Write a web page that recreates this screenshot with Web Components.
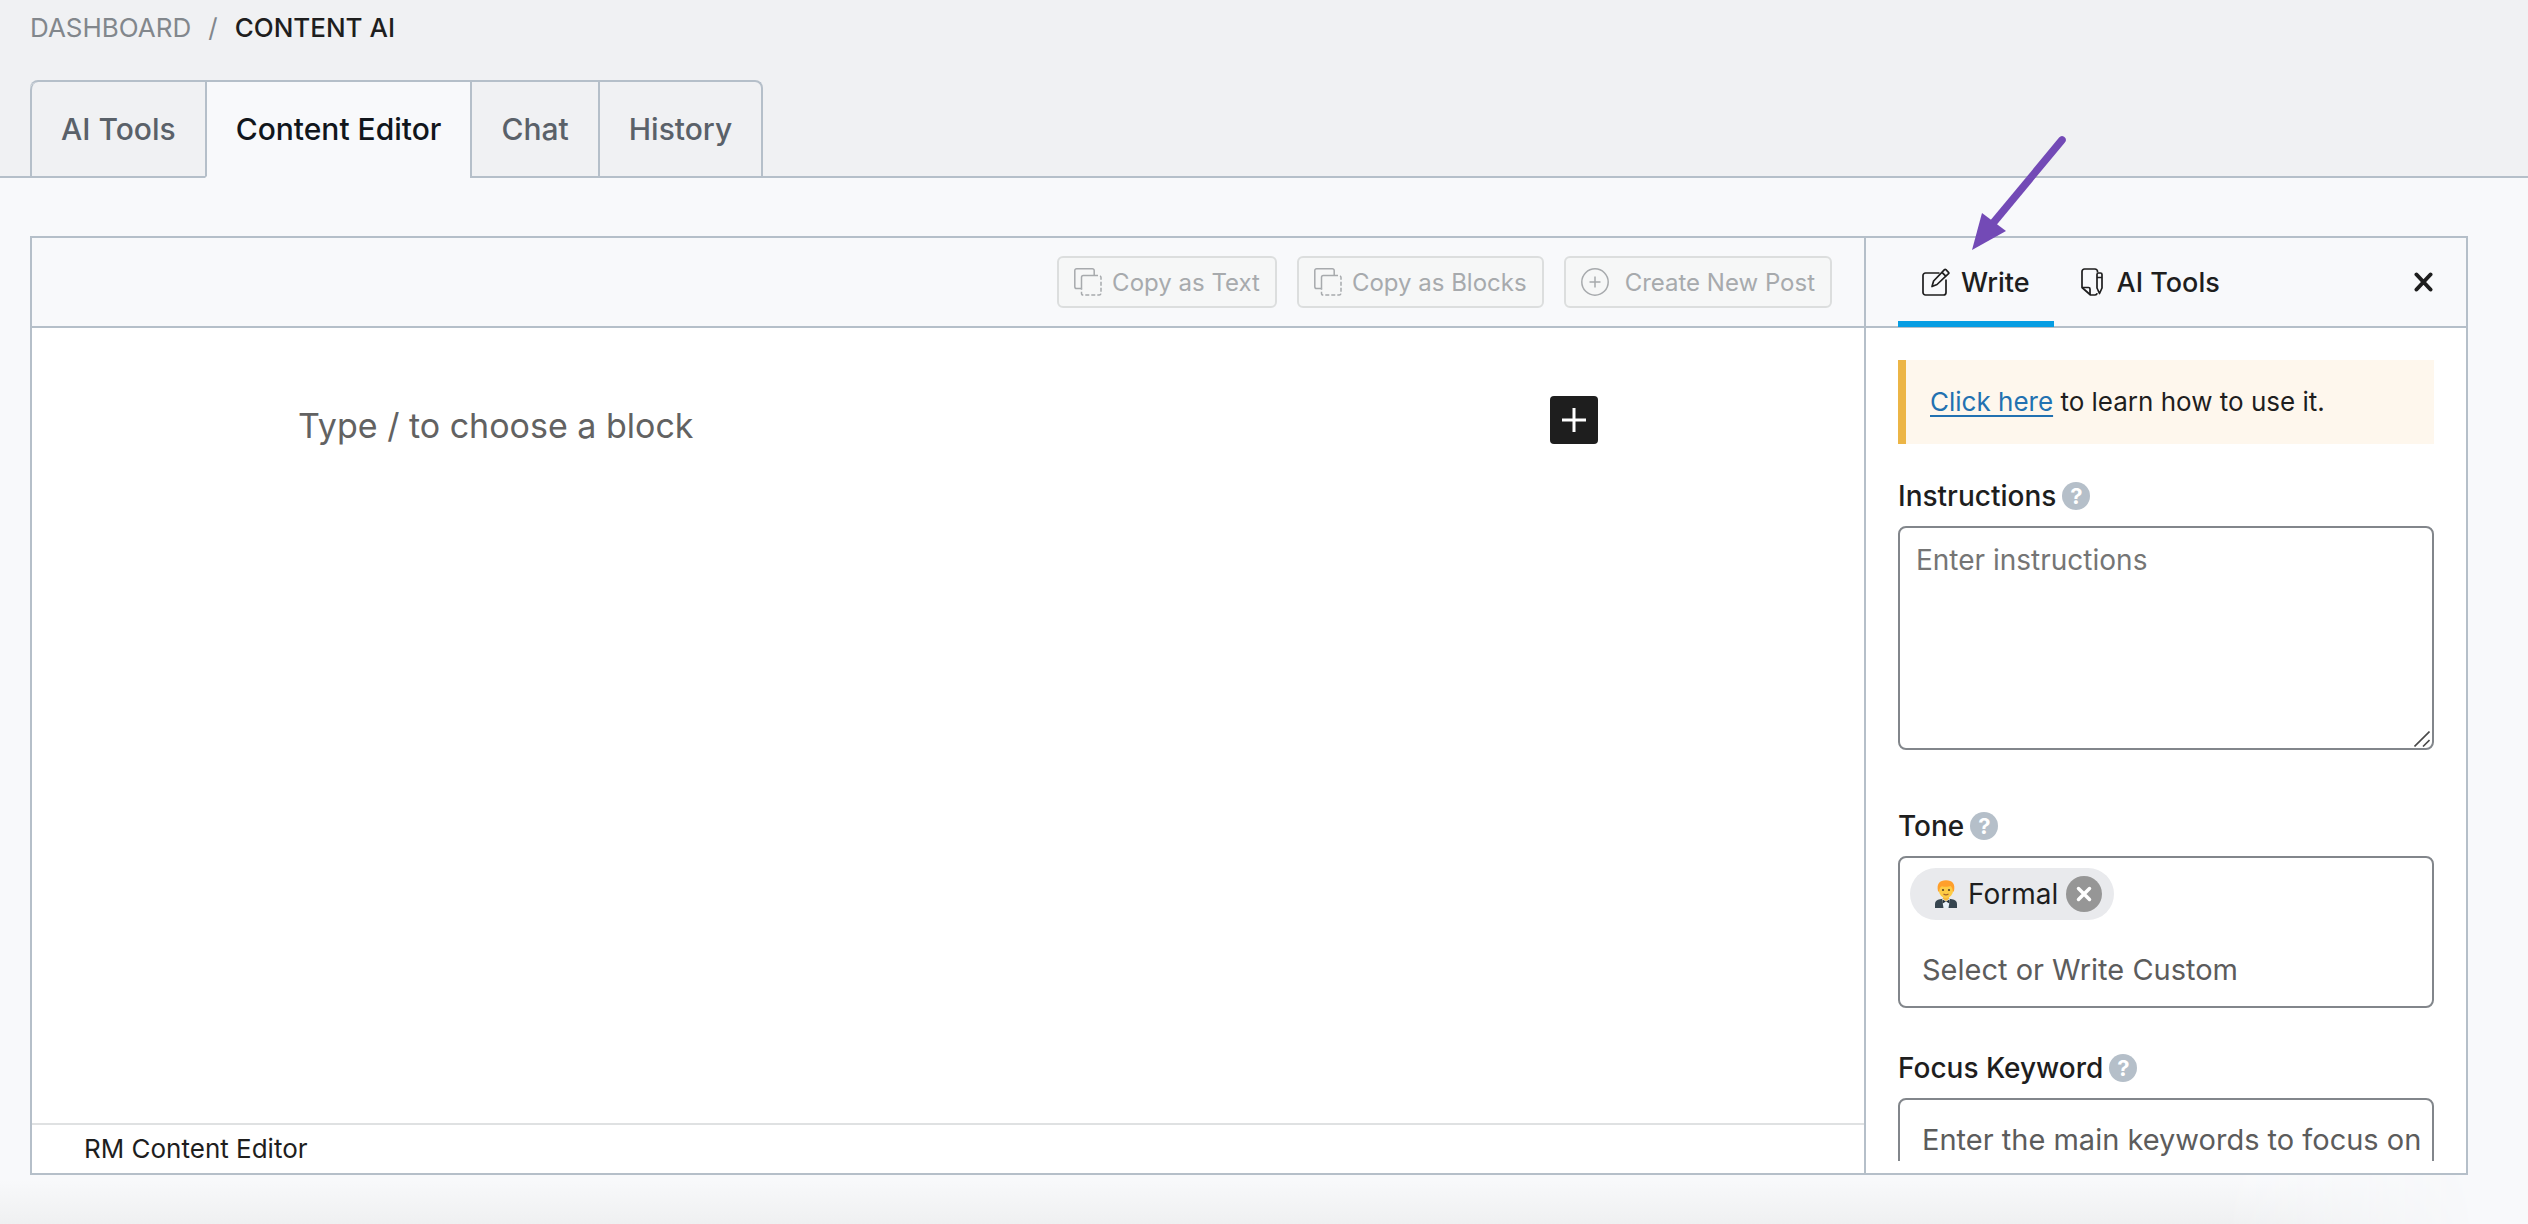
<!DOCTYPE html>
<html lang="en">
<head>
<meta charset="utf-8">
<title>Content AI</title>
<style>
  :root {
    --line: #b5bfc9;
    --page: #f8f9fb;
    --ink: #1e1e1e;
  }
  html, body { height: 100%; margin: 0; }
  body { background: var(--page); color: var(--ink); font-family: Inter, "Liberation Sans", sans-serif; font-size: 26px; }
</style>
</head>
<body>
<content-ai-page>
  <page-header slot="header">
    <page-tab slot="tabs">AI Tools</page-tab>
    <page-tab slot="tabs" active>Content Editor</page-tab>
    <page-tab slot="tabs">Chat</page-tab>
    <page-tab slot="tabs">History</page-tab>
  </page-header>
  <block-editor>
    <tool-button slot="tools" icon="copy">Copy as Text</tool-button>
    <tool-button slot="tools" icon="copy">Copy as Blocks</tool-button>
    <tool-button slot="tools" icon="add">Create New Post</tool-button>
    <span slot="status">RM Content Editor</span>
  </block-editor>
  <write-panel>
    <side-tab slot="tabs" icon="write" active>Write</side-tab>
    <side-tab slot="tabs" icon="tools">AI Tools</side-tab>
    <notice-box><a href="#learn">Click here</a> to learn how to use it.</notice-box>
    <form-field kind="area" label="Instructions" placeholder="Enter instructions"></form-field>
    <form-field kind="tokens" label="Tone" token="Formal" placeholder="Select or Write Custom"></form-field>
    <form-field kind="tokens" label="Focus Keyword" placeholder="Enter the main keywords to focus on"></form-field>
  </write-panel>
</content-ai-page>

<script>
const ICONS = {
  copy: `<svg width="28" height="28" viewBox="0 0 28 28" fill="none" stroke="currentColor" stroke-width="1.5"><path d="M7.5 20.5H2.6A1.8 1.8 0 0 1 .8 18.700V2.600A1.800 1.800 0 0 1 2.600.8h15.800a1.800 1.800 0 0 1 1.800 1.800v4.800"/><path d="M7.500 20.500V9.400a1.800 1.800 0 0 1 1.800-1.800H20"/><path stroke-dasharray="4 2" d="M20 7.600h5.200a1.800 1.800 0 0 1 1.800 1.800v15.800a1.800 1.800 0 0 1-1.800 1.800H9.300a1.800 1.800 0 0 1-1.800-1.800v-5"/></svg>`,
  add: `<svg width="28" height="28" viewBox="0 0 28 28" fill="none" stroke="currentColor" stroke-width="1.500"><circle cx="14" cy="14" r="13.200"/><path d="M14 8.500v11M8.500 14h11"/></svg>`,
  write: `<svg width="28" height="28" viewBox="0 0 28 28" fill="none" stroke="currentColor" stroke-width="1.700" stroke-linejoin="round"><path d="M17.500 5H3.500A2.500 2.500 0 0 0 1 7.500v17A2.500 2.500 0 0 0 3.500 27h18a2.500 2.500 0 0 0 2.500-2.500V11.500"/><path d="M22.500 1.700a1 1 0 0 1 1.400 0l2.600 2.600a1 1 0 0 1 0 1.400L15 16.500l-5 2 1.600-5.500z"/><path d="M20 4.300l4 4"/></svg>`,
  tools: `<svg width="28" height="28" viewBox="0 0 28 28" fill="none" stroke="currentColor" stroke-width="1.700" stroke-linejoin="round"><path d="M19.500 4.500V3.500A2.500 2.500 0 0 0 17 1H6.500A2.500 2.500 0 0 0 4 3.500V19.500l8.500 7.500H17a2.500 2.500 0 0 0 2.200-1.800"/><path d="M4 19.500h6.500a1.500 1.500 0 0 1 1.500 1.500v6"/><path d="M19 6.500A1.500 1.500 0 0 1 20.500 5h2A1.500 1.500 0 0 1 24 6.500V20l-2.500 5.500L19 20zM19 9.500h5"/></svg>`,
  close: `<svg width="20" height="20" viewBox="0 0 20 20" fill="none" stroke="currentColor" stroke-width="4" stroke-linecap="round"><path d="M2.500 2.500l14 15M16.500 2.500l-14 15"/></svg>`,
  plus: `<svg width="26" height="26" viewBox="0 0 26 26" fill="none" stroke="currentColor" stroke-width="3"><path d="M13 1v24M1 13h24"/></svg>`,
  remove: `<svg width="16" height="16" viewBox="0 0 16 16" fill="none" stroke="currentColor" stroke-width="3.500" stroke-linecap="round"><path d="M2.500 2.500l11 11M13.500 2.500l-11 11"/></svg>`,
  person: `<svg width="24" height="28" viewBox="0 0 24 28"><path fill="#36454f" d="M1 28v-4c0-3 2-4.200 5-4.700l3-.6h6l3 .6c3 .500 5 1.700 5 4.700v4z"/><path fill="#e8f1f8" d="M8 19l4-1 4 1-1.500 9h-5z"/><path fill="#222c33" d="M12 21.500l-3.500-2v4zM12 21.500l3.500-2v4z"/><path fill="#f5b83d" d="M9 15h6v4l-3 2-3-2z"/><ellipse cx="12" cy="10" rx="7.200" ry="8" fill="#fdcb45"/><path fill="#ff9f2b" d="M4 11C2.500 4 5.500.3 12 .3S21.500 4 20 11l-1 1c-.3-3-1-5-2.500-6-2 .8-6 1-8.500.2C6 7 5.300 9 5 12z"/><circle cx="9" cy="10" r="1.100" fill="#5b4123"/><circle cx="15" cy="10" r="1.100" fill="#5b4123"/><path d="M9.500 14q2.500 1.700 5 0" fill="none" stroke="#a8652a" stroke-width="1.200"/></svg>`
};

const BASE = `:host,*{box-sizing:border-box}svg{display:block;flex:none}button,input,textarea{font:inherit;color:inherit;margin:0;border:0;background:none;padding:0;outline:0}`;

function define(name, render) {
  customElements.define(name, class extends HTMLElement {
    connectedCallback() {
      if (this.shadowRoot) return;
      const t = document.createElement('template');
      t.innerHTML = render(this);
      this.attachShadow({ mode: 'open' }).append(t.content.cloneNode(true));
    }
  });
}

define('content-ai-page', () => `
<style>${BASE}
  :host{display:flex;flex-direction:column;height:100vh}
  main{flex:1;min-height:0;display:flex;margin:58px 60px 0 30px;border:2px solid var(--line);background:#fff}
  .shade{flex:none;height:49px;background:linear-gradient(to top,#eff0f1,#f8f9fb 90%);-webkit-mask-image:linear-gradient(to right,#000 88%,transparent 98%);mask-image:linear-gradient(to right,#000 88%,transparent 98%)}
</style>
<slot name="header"></slot>
<main><slot></slot></main>
<div class="shade"></div>`);

define('page-header', () => `
<style>${BASE}
  :host{display:block;flex:none;background:#f0f1f3;border-bottom:2px solid var(--line);padding:12px 30px 0}
  .crumbs{display:flex;gap:17px;line-height:32px;color:#82878c}
  .crumbs a{color:inherit;text-decoration:none}
  .crumbs b{font-weight:500;color:var(--ink)}
  nav{display:flex;width:max-content;margin:36px 0 -2px;height:98px;border:solid var(--line);border-width:2px 2px 0 0;border-radius:8px 8px 0 0}
</style>
<div class="crumbs"><a href="#dashboard">DASHBOARD</a><span>/</span><b>CONTENT AI</b></div>
<nav><slot name="tabs"></slot></nav>`);

define('page-tab', el => `
<style>${BASE}
  :host{display:flex}
  button{padding:0 29px;font-size:30px;font-weight:500;color:#5a6169;border:solid var(--line);border-width:0 0 2px 2px;cursor:pointer}
  :host(:first-child) button{border-top-left-radius:8px}
  :host([active]) button{color:#11161c;background:var(--page);border-bottom-color:var(--page)}
</style>
<button type="button"><slot></slot></button>`);

define('block-editor', () => `
<style>${BASE}
  :host{flex:1;min-width:0;display:flex;flex-direction:column}
  .bar{display:flex;justify-content:flex-end;align-items:center;gap:20px;height:90px;padding:0 32px;background:var(--page);border-bottom:2px solid var(--line)}
  .canvas{flex:1;padding:68px 32px 0}
  .block{display:flex;align-items:flex-start;max-width:1300px;margin:0 auto}
  input{flex:1;min-width:0;height:58px;font-size:34px}
  input::placeholder{color:#626262;opacity:1}
  .block button{display:grid;place-items:center;width:48px;height:48px;border-radius:4px;background:#1e1e1e;color:#fff}
  footer{height:50px;padding:0 52px;border-top:2px solid #dfe1e2;line-height:48px}
</style>
<div class="bar"><slot name="tools"></slot></div>
<div class="canvas"><div class="block"><input type="text" aria-label="Block" placeholder="Type / to choose a block"><button type="button" aria-label="Add block">${ICONS.plus}</button></div></div>
<footer><slot name="status"></slot></footer>`);

define('tool-button', el => `
<style>${BASE}
  :host{display:block}
  button{display:flex;align-items:center;gap:10px;height:52px;padding:0 15px;font-size:24px;color:#a7aaad;background:#f6f7f7;border:2px solid #dcdede;border-radius:6px}
  :host([icon=add]) button{gap:16px}
</style>
<button type="button" disabled>${ICONS[el.getAttribute('icon')]}<slot></slot></button>`);

define('write-panel', () => `
<style>${BASE}
  :host{position:relative;flex:none;width:602px;display:flex;flex-direction:column;border-left:2px solid var(--line)}
  header{flex:none;display:flex;align-items:center;height:90px;padding:0 32px;background:var(--page);border-bottom:2px solid var(--line)}
  .close{margin-left:auto}
  .body{flex:1;min-height:0;overflow:hidden;margin-bottom:12px;padding:32px 32px 0}
  .arrow{position:absolute;left:94px;top:-108px;pointer-events:none}
</style>
<header><slot name="tabs"></slot><button class="close" type="button" aria-label="Close">${ICONS.close}</button></header>
<div class="body"><slot></slot></div>
<svg class="arrow" width="120" height="130" viewBox="0 0 120 130" fill="#734ab6"><path d="M102 10L34 92" stroke="#734ab6" stroke-width="7.500" stroke-linecap="round"/><path d="M12 120L22 83L46 101z"/></svg>`);

define('side-tab', el => `
<style>${BASE}
  :host{display:block}
  button{display:flex;align-items:center;gap:11px;height:90px;padding:0 24px;font-size:27px;font-weight:500}
  :host([active]) button{box-shadow:inset 0 -6px #069de3}
</style>
<button type="button">${ICONS[el.getAttribute('icon')]}<slot></slot></button>`);

define('notice-box', () => `
<style>${BASE}
  :host{display:block;border-left:8px solid #ecb546;background:#fef7ed;padding:22px 24px;font-size:26px;line-height:40px}
  ::slotted(a){color:#2271b1;text-decoration-thickness:2px;text-underline-offset:4px}
</style>
<slot></slot>`);

define('form-field', el => {
  const label = el.getAttribute('label'), hint = el.getAttribute('placeholder'), token = el.getAttribute('token');
  const control = el.getAttribute('kind') === 'area'
    ? `<div class="area"><textarea id="c" placeholder="${hint}"></textarea><svg width="16" height="16" viewBox="0 0 16 16" stroke="#4a4a4a" stroke-width="1.600"><path d="M0.500 15.500L15.500.5M9 15.500L15.500 9"/></svg></div>`
    : `<div class="tokens">${token ? `<span class="chip">${ICONS.person}<span>${token}</span><button type="button" aria-label="Remove ${token}">${ICONS.remove}</button></span>` : ''}<input id="c" type="text" placeholder="${hint}"></div>`;
  return `
<style>${BASE}
  :host{display:block;padding-top:36px}
  .head{display:flex;align-items:center;gap:6px;height:32px;margin-bottom:14px}
  label{font-size:28px;font-weight:500}
  .help{width:28px;height:28px;border-radius:50%;background:#b5bfc9;color:#fff;font-size:22px;font-weight:700;line-height:28px;text-align:center}
  .area{position:relative;margin-bottom:24px}
  textarea{display:block;width:100%;height:224px;padding:12px 16px;border:2px solid #82868b;border-radius:8px;background:#fff;font-size:28px;line-height:40px;resize:none}
  textarea::placeholder{color:#757575;opacity:1}
  .area svg{position:absolute;right:4px;bottom:3px}
  .tokens{display:flex;flex-direction:column;align-items:flex-start;gap:20px;padding:10px 0 8px 10px;margin-bottom:8px;border:2px solid #82868b;border-radius:8px;background:#fff}
  .chip{display:flex;align-items:center;height:52px;padding:0 12px 0 24px;border-radius:26px;background:#e9eaed;font-size:28px}
  .chip span{margin:0 8px 0 10px}
  .chip button{display:grid;place-items:center;width:36px;height:36px;border-radius:50%;background:#969696;color:#fff}
  input{width:100%;height:58px;padding-left:12px;font-size:29px}
  input::placeholder{color:#5c5c5c;opacity:1}
</style>
<div class="head"><label for="c">${label}</label><button class="help" type="button" aria-label="Help: ${label}">?</button></div>
${control}`;
});
</script>
</body>
</html>
